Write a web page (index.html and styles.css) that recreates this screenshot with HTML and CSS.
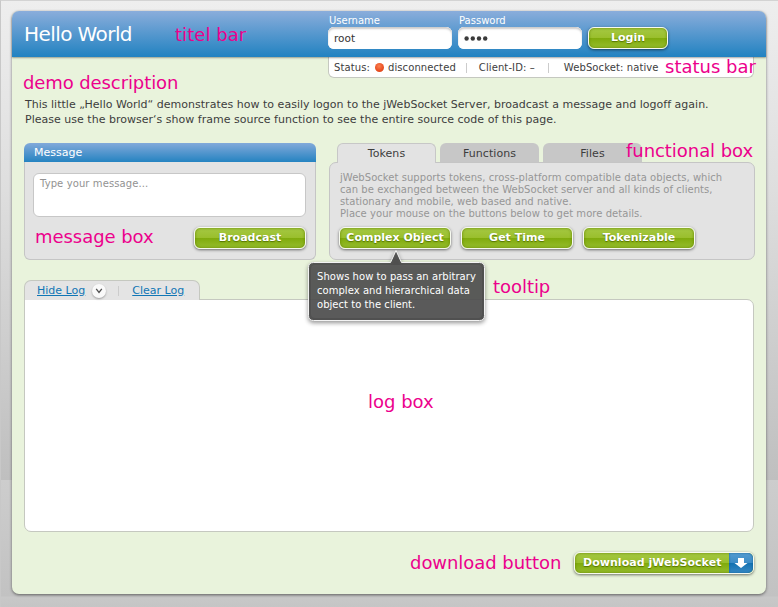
FILE: index.html
```html
<!DOCTYPE html>
<html lang="en">
<head>
<meta charset="utf-8">
<title>Hello World</title>
<link rel="stylesheet" href="styles.css">
</head>
<body>
<main class="panel">
  <header class="title-bar">
    <h1>Hello World</h1>
    <form class="login">
      <label class="field"><span>Username</span><span class="input">root</span></label>
      <label class="field password"><span>Password</span><span class="input"><svg width="26" height="6" viewBox="0 0 26 6" fill="#3b3b3b"><circle cx="2.600" cy="3.500" r="2.200"/><circle cx="8.800" cy="3.500" r="2.200"/><circle cx="15" cy="3.500" r="2.200"/><circle cx="21.200" cy="3.500" r="2.200"/></svg></span></label>
      <button type="button" class="btn btn-login"><span>Login</span></button>
    </form>
  </header>
  <div class="status-bar">
    <span>Status:</span><i class="led"></i><span>disconnected</span><i class="sep"></i><span>Client-ID: –</span><i class="sep sep2"></i><span>WebSocket: native</span>
  </div>
  <div class="description">
    <p>This little „Hello World“ demonstrates how to easily logon to the jWebSocket Server, broadcast a message and logoff again.</p>
    <p>Please use the browser‘s show frame source function to see the entire source code of this page.</p>
  </div>
  <div class="boxes">
    <section class="message-box">
      <h2>Message</h2>
      <div class="message-body">
        <div class="textarea">Type your message...</div>
        <button type="button" class="btn">Broadcast</button>
      </div>
    </section>
    <section class="function-box">
      <nav class="tabs"><a class="tab active">Tokens</a><a class="tab">Functions</a><a class="tab">Files</a></nav>
      <div class="function-body">
        <p>jWebSocket supports tokens, cross-platform compatible data objects, which</p>
        <p>can be exchanged between the WebSocket server and all kinds of clients,</p>
        <p>stationary and mobile, web based and native.</p>
        <p>Place your mouse on the buttons below to get more details.</p>
        <div class="buttons">
          <button type="button" class="btn">Complex Object</button>
          <button type="button" class="btn">Get Time</button>
          <button type="button" class="btn">Tokenizable</button>
        </div>
      </div>
    </section>
  </div>
  <div class="log-tab">
    <a>Hide Log</a>
    <span class="chevron"><svg width="8" height="6" viewBox="0 0 8 6"><path d="M1.200 .8 4 4.400 6.800 .8" fill="none" stroke="#505050" stroke-width="1.300"/></svg></span>
    <i class="sep"></i>
    <a>Clear Log</a>
  </div>
  <div class="log-box"></div>
  <footer>
    <button type="button" class="btn btn-download"><span>Download jWebSocket</span><b class="arrow"><svg width="14" height="10" viewBox="0 0 14 10"><path d="M4 0h6v5h3.500L7 10 .5 5H4z" fill="#fff"/></svg></b></button>
  </footer>
</main>
<div class="tooltip">
  <svg class="tip-shape" width="197" height="91" viewBox="298 240 197 91">
    <path d="M313.500 262.500H390.500L396 250.500 401.500 262.500H479.500Q484.500 262.500 484.500 267.500V315.500Q484.500 320.500 479.500 320.500H313.500Q308.500 320.500 308.500 315.500V267.500Q308.500 262.500 313.500 262.500Z" fill="#464646" fill-opacity=".88" stroke="#f3f3f3"/>
    <rect x="311" y="265" width="171" height="53" rx="4" fill="#fff" fill-opacity=".06"/>
  </svg>
  <p>Shows how to pass an arbitrary</p>
  <p>complex and hierarchical data</p>
  <p>object to the client.</p>
</div>
<span class="note n-title">titel bar</span>
<span class="note n-status">status bar</span>
<span class="note n-demo">demo description</span>
<span class="note n-function">functional box</span>
<span class="note n-message">message box</span>
<span class="note n-tooltip">tooltip</span>
<span class="note n-log">log box</span>
<span class="note n-download">download button</span>
</body>
</html>
```

FILE: styles.css
```css
* { box-sizing: border-box; }
body {
  margin: 0;
  width: 778px;
  height: 607px;
  padding: 10px 12px 0 11px;
  overflow: hidden;
  border-top: 1px solid #d3d3d3;
  border-left: 1px solid #c8c8c8;
  background: linear-gradient(#eeeeee 0, #dedede 190px, #bfbfbf 480px, #cdcdcd 480px, #c2c2c2 596px, #c8c8c8 597px, #c5c5c5 607px);
  font: 11px/12px "DejaVu Sans", sans-serif;
  color: #3d3d3d;
}
h1, h2, p { margin: 0; font-weight: normal; }
p, span, a { white-space: nowrap; }
.panel {
  width: 754px;
  height: 583px;
  border-radius: 7px;
  background: #e9f3dc;
  box-shadow: 0 1px 3px rgba(0,0,0,.5);
}
.title-bar {
  height: 46px;
  padding-left: 12px;
  display: flex;
  border-radius: 7px 7px 0 0;
  background: linear-gradient(#8aaddb, #2182c1);
  box-shadow: 0 1px 2px rgba(0,0,0,.35);
  position: relative;
  color: #fff;
}
h1 { width: 304px; font-size: 20px; line-height: 46px; letter-spacing: -.58px; }
.login { display: flex; gap: 6px; }
.field { width: 124px; display: flex; flex-direction: column; padding: 4px 0 0; font-size: 10px; }
.field > span:first-child { padding-left: 1px; }
.input {
  height: 22px;
  padding: 0 6px;
  display: flex;
  align-items: center;
  border-radius: 6px;
  background: #fff;
  box-shadow: inset 0 2px 2px #ccc, inset 0 0 0 1px #fff;
  color: #333;
  font-size: 10.5px;
}
.btn {
  width: 112px;
  height: 22px;
  padding: 0;
  display: flex;
  align-items: center;
  justify-content: center;
  border: 1px solid #f7faef;
  border-radius: 6px;
  background: linear-gradient(#a5c843 0, #9abf2d 48%, #80ab0d 52%, #96bd2d 100%);
  box-shadow: 0 1px 3px rgba(0,0,0,.55), inset 0 0 3px #638300;
  color: #fff;
  font: bold 11px/12px "DejaVu Sans", sans-serif;
  text-shadow: 0 1px 1px #567400;
}
.btn-login { width: 80px; margin-top: 16px; }
.status-bar {
  width: 426px;
  height: 21px;
  margin-left: 316px;
  padding: 1px 0 0 5px;
  display: flex;
  align-items: center;
  border: 1px solid #c5c8c0;
  border-top: 0;
  border-radius: 0 0 6px 6px;
  background: #fff;
  font-size: 10px;
  letter-spacing: .1px;
}
.led { width: 9px; height: 9px; margin: 0 4px 0 5px; border-radius: 50%; background: radial-gradient(circle at 45% 35%, #fa8152, #e94d20 60%, #c9421b); }
.sep { width: 1px; height: 10px; background: #ccc; }
.status-bar .sep { margin: 0 12px 0 10px; }
.status-bar .sep2 { margin: 0 15px 0 13px; }
.description { margin: 19px 0 0 13px; line-height: 15px; letter-spacing: .014px; }
.boxes { margin: 16px 0 0 12px; display: flex; gap: 13px; }
.message-box { width: 292px; height: 117px; }
h2 { height: 19px; padding-left: 10px; border-radius: 6px 6px 0 0; background: linear-gradient(#82a9da, #2583c1); color: #fff; font-size: 11px; line-height: 19px; }
.message-body, .function-body { height: 98px; border: 1px solid #c5c5c5; border-radius: 7px; background: #e3e3e3; }
.message-body { border-top: 0; border-radius: 0 0 6px 6px; padding: 11px 9px 0 8px; display: flex; flex-direction: column; align-items: flex-end; gap: 10px; }
.textarea { width: 273px; height: 44px; border: 1px solid #c7c7c7; border-radius: 6px; background: #fff; padding: 4px 6px; font-size: 10px; letter-spacing: .1px; color: #929292; }
.function-box { width: 426px; }
.tabs { height: 19px; display: flex; gap: 4px; padding-left: 8px; }
.tab { width: 99px; height: 19px; border-radius: 6px 6px 0 0; background: #c7c7c7; text-align: center; line-height: 21px; letter-spacing: .05px; }
.tab.active { height: 20px; border: 1px solid #c7c7c7; border-bottom: 0; background: #e3e3e3; position: relative; line-height: 19px; }
.function-body { padding: 9px 8px; font-size: 10px; letter-spacing: .045px; color: #969696; }
.function-body p { padding-left: 2px; }
.buttons { display: flex; gap: 10px; margin: 7px 0 0 1px; }
.log-tab { width: 176px; height: 20px; margin: 20px 0 -1px 12px; padding-left: 12px; display: flex; align-items: center; border: 1px solid #c5c8c0; border-bottom: 0; border-radius: 7px 7px 0 0; background: #e4e4e4; position: relative; }
.log-tab a { color: #1176b5; text-decoration: underline; text-underline-offset: 1px; }
.chevron { width: 14px; height: 14px; margin-left: 7px; border-radius: 50%; background: #fafafa; box-shadow: 0 1px 2px rgba(0,0,0,.3); display: flex; align-items: center; justify-content: center; }
.log-tab .sep { margin: 0 13px 0 12px; }
.log-box { width: 730px; height: 233px; margin-left: 12px; border: 1px solid #c5c8c0; border-radius: 0 7px 7px 7px; background: #fff; }
footer { margin: 20px 12px 0 0; display: flex; justify-content: flex-end; }
.btn-download { width: 180px; justify-content: space-between; padding-left: 8px; letter-spacing: .04px; }
.arrow { width: 24px; height: 20px; border-radius: 0 5px 5px 0; background: linear-gradient(#559bd0 0, #3c8cc7 48%, #1472b2 52%, #3688c3); box-shadow: inset 0 0 2px #07598f; display: flex; align-items: center; justify-content: center; }
.tooltip { position: absolute; left: 298px; top: 240px; width: 197px; height: 91px; padding: 30px 0 0 19px; color: #fff; font-size: 10px; line-height: 14px; letter-spacing: .04px; }
.tip-shape { position: absolute; left: 0; top: 0; filter: drop-shadow(0 2px 2px rgba(0,0,0,.45)); }
.tooltip p { position: relative; }
.note { position: absolute; color: #ec008c; font-size: 18px; line-height: 22px; letter-spacing: -.05px; }
.n-title { left: 175px; top: 24px; letter-spacing: .05px; }
.n-status { left: 665px; top: 56px; letter-spacing: 0; }
.n-demo { left: 23px; top: 72px; letter-spacing: -.1px; }
.n-function { left: 626px; top: 140px; }
.n-message { left: 35px; top: 226px; }
.n-tooltip { left: 493px; top: 276px; }
.n-log { left: 368px; top: 391px; letter-spacing: 0; }
.n-download { left: 410px; top: 552px; }
```
